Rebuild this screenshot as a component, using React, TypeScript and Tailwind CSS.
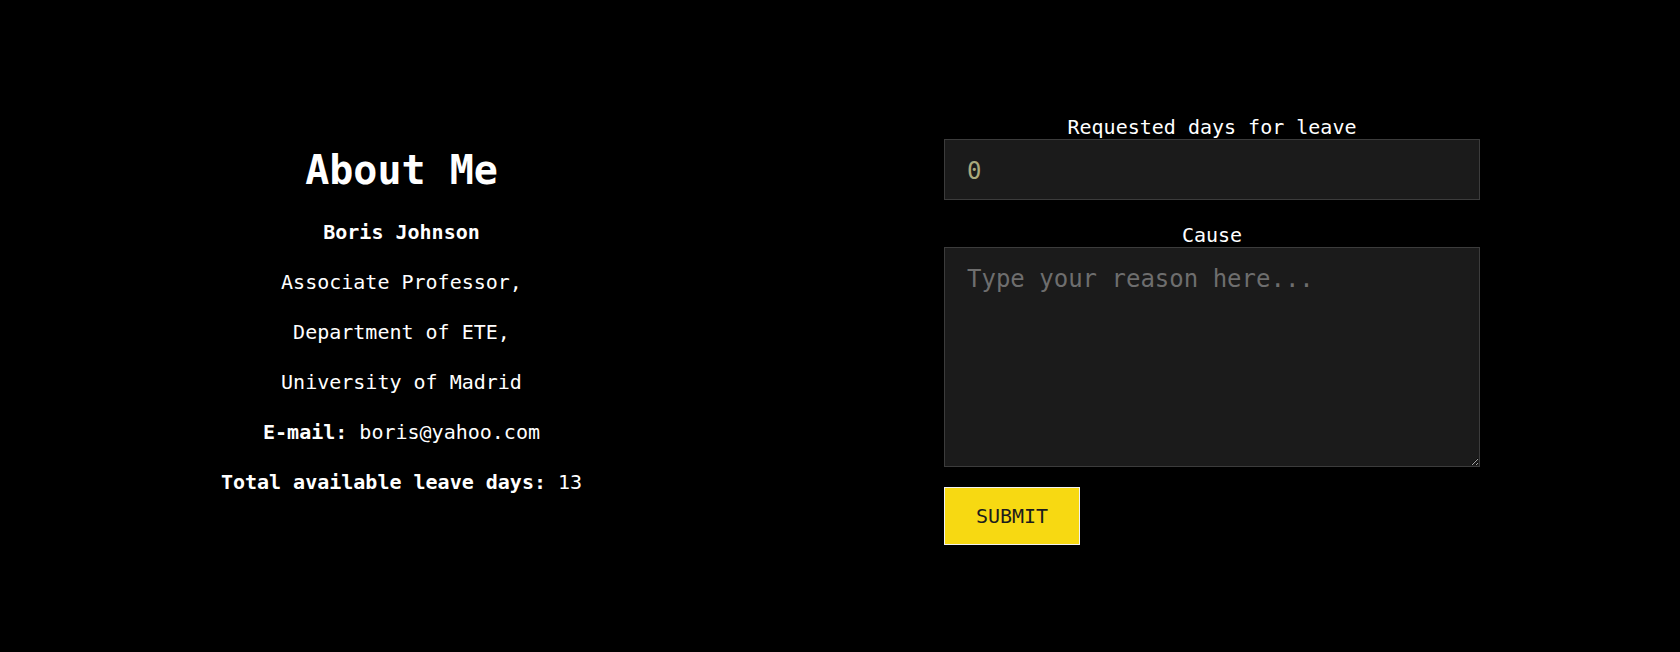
import React from "react";

export default function App() {
  const mono = { fontFamily: '"DejaVu Sans Mono", "Liberation Mono", monospace' };
  return (
    <div
      className="w-full min-h-[652px] bg-black text-white"
      style={mono}
    >
      <div className="grid grid-cols-[803px_1fr]">
        {/* Left column */}
        <div className="flex flex-col items-center pt-[146px] text-center">
          <h1 className="text-[40px] leading-[48px] font-bold">About Me</h1>
          <div className="mt-[23px] flex flex-col gap-[20px] text-[20px] leading-[30px]">
            <p className="font-bold">Boris Johnson</p>
            <p>Associate Professor,</p>
            <p>Department of ETE,</p>
            <p>University of Madrid</p>
            <p>
              <span className="font-bold">E-mail:</span> boris@yahoo.com
            </p>
            <p>
              <span className="font-bold">Total available leave days:</span> 13
            </p>
          </div>
        </div>

        {/* Right column */}
        <div className="pt-[115px] pl-[141px]">
          <form className="flex w-[536px] flex-col" onSubmit={(e) => e.preventDefault()}>
            <label className="block text-center text-[20px] leading-[24px]">
              Requested days for leave
            </label>
            <input
              type="number"
              defaultValue={0}
              className="h-[61px] w-full border border-[#3c3c3c] bg-[#1b1b1b] px-[22px] pt-[2px] text-[24px] text-[#a9a97c] outline-none"
              style={mono}
            />
            <label className="mt-[23px] block text-center text-[20px] leading-[24px]">
              Cause
            </label>
            <textarea
              placeholder="Type your reason here..."
              className="h-[220px] w-full border border-[#3c3c3c] bg-[#1b1b1b] px-[22px] pt-[17px] text-[24px] leading-[28px] text-white placeholder:text-[#6e6e6e] outline-none"
              style={mono}
            />
            <div className="mt-[20px]">
              <button
                type="submit"
                className="h-[58px] w-[136px] border border-[#f2f2f2] bg-[#f7d912] text-[20px] text-[#1c1c1c]"
                style={mono}
              >
                SUBMIT
              </button>
            </div>
          </form>
        </div>
      </div>
    </div>
  );
}
